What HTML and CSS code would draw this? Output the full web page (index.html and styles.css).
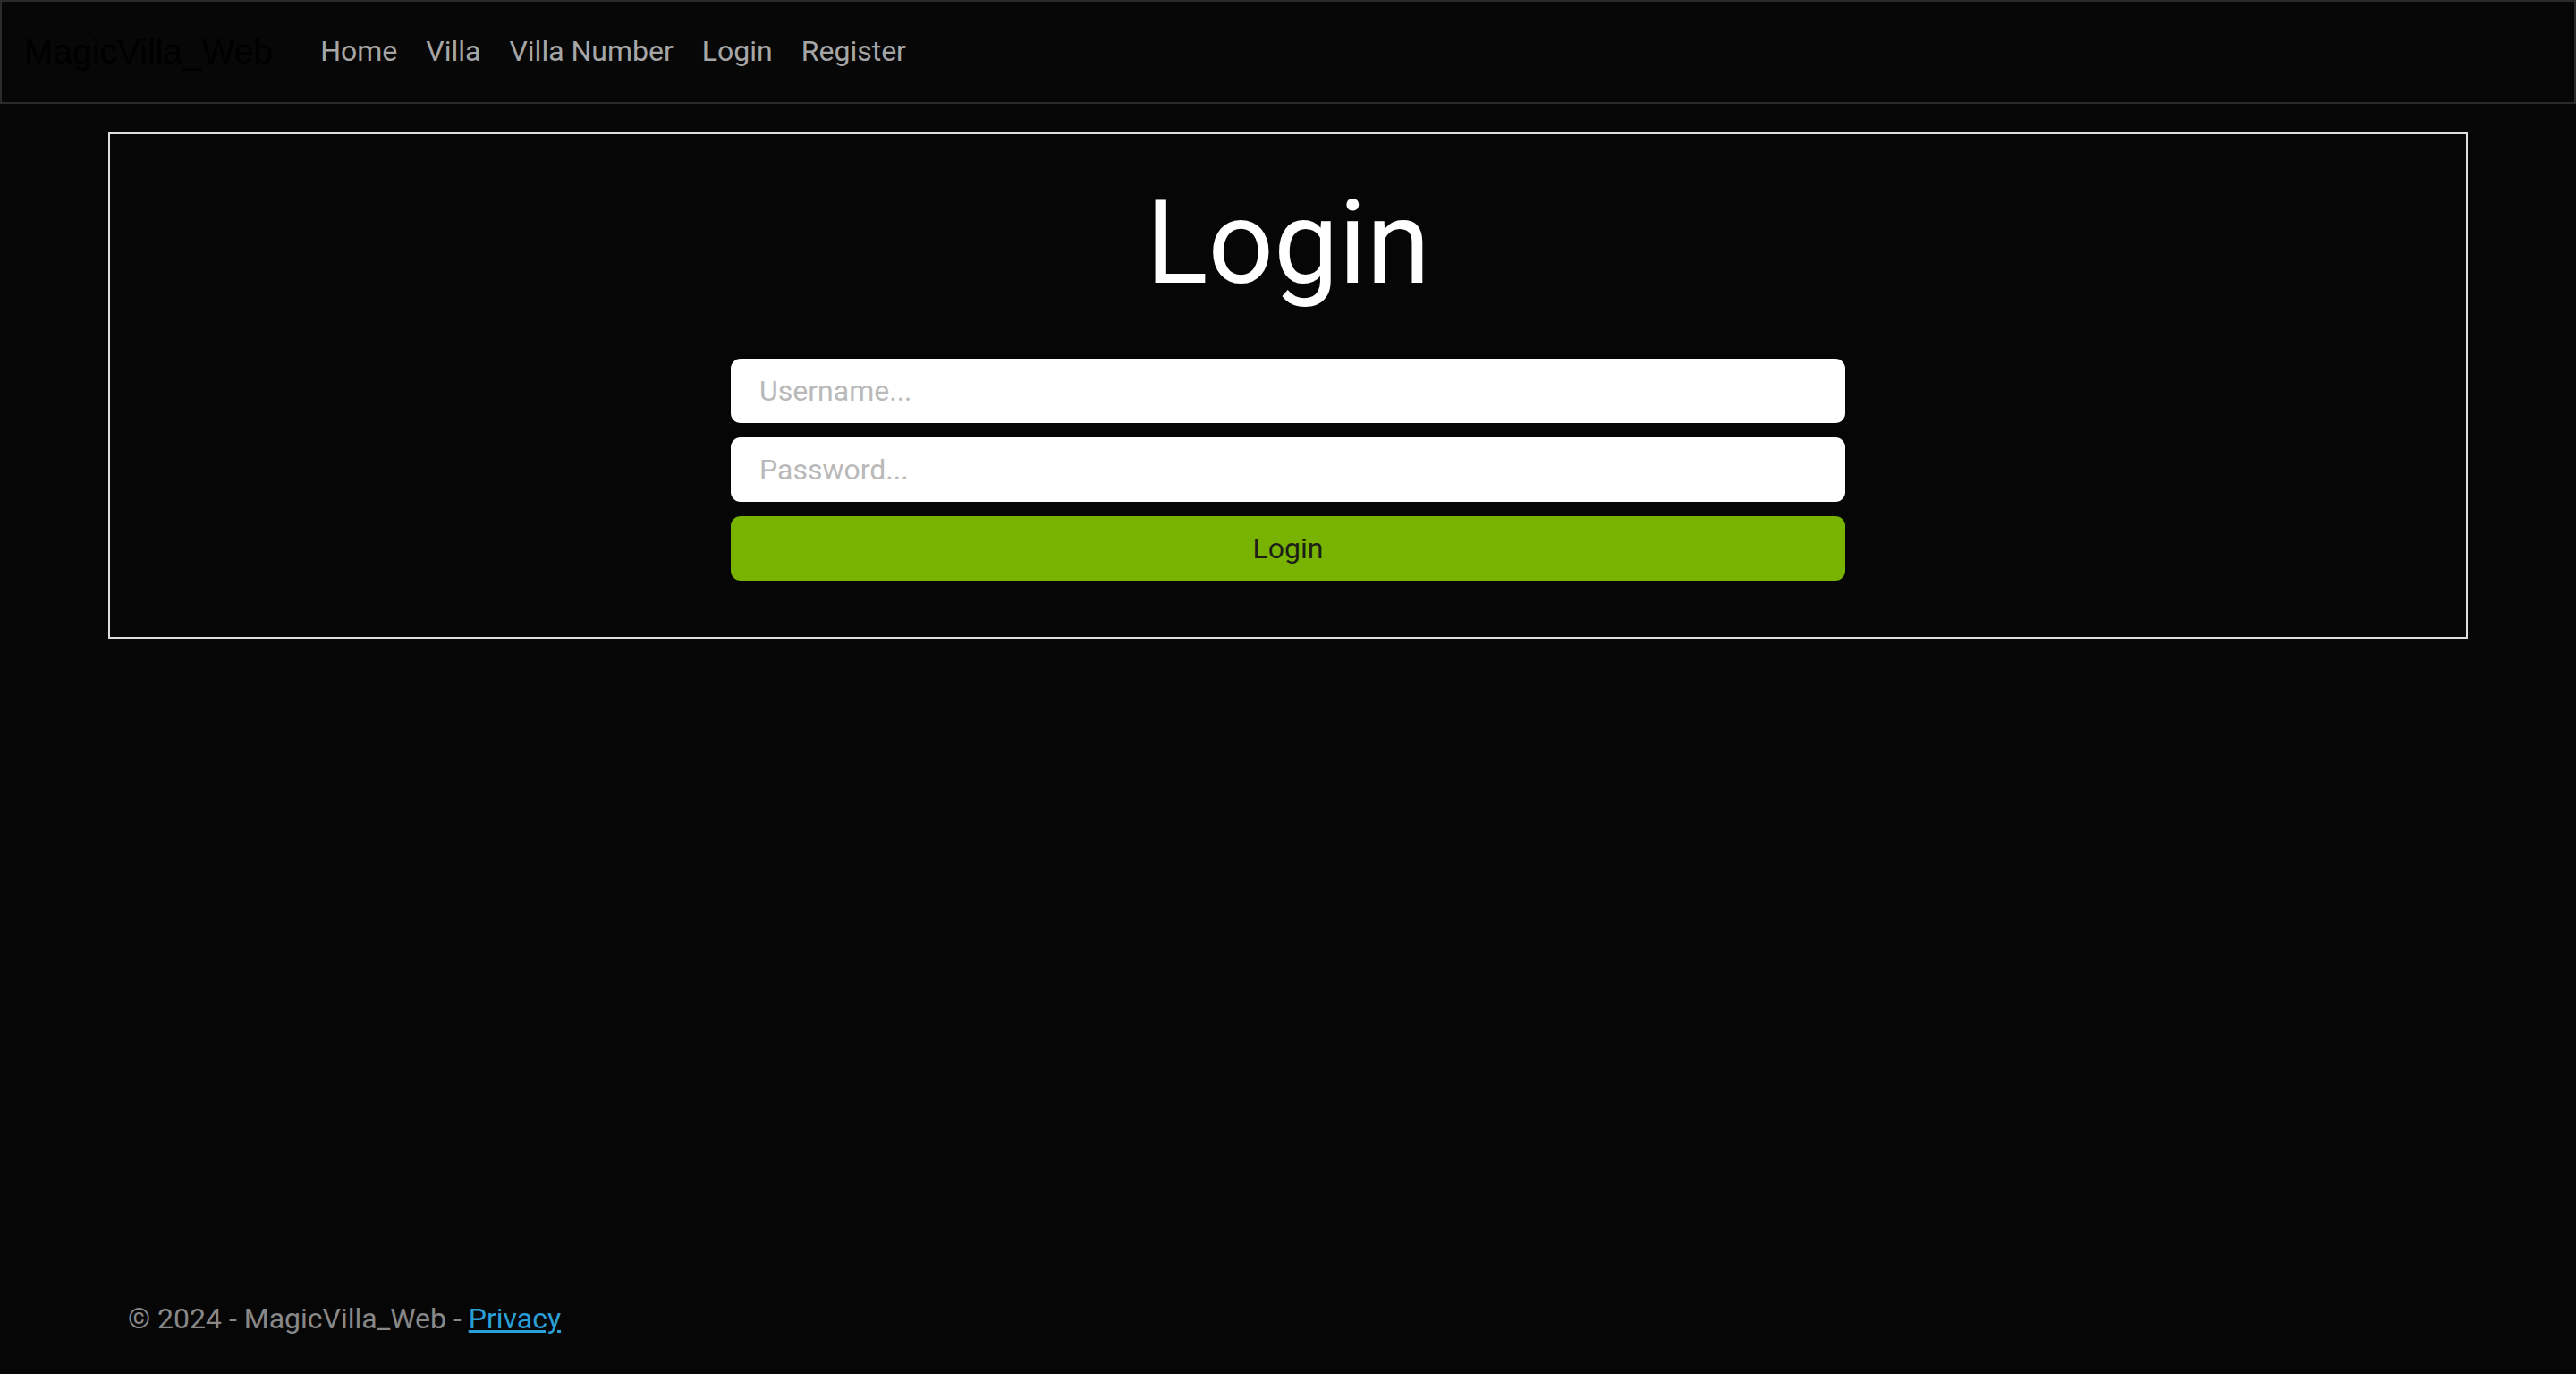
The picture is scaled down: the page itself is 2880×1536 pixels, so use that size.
FILE: index.html
```html
<!DOCTYPE html>
<html lang="en">
<head>
    <meta charset="UTF-8">
    <title>Login - MagicVilla_Web</title>
    <link rel="stylesheet" href="styles.css">
</head>
<body>
    <header>
        <nav class="navbar">
            <a class="brand" href="#">MagicVilla_Web</a>
            <ul class="nav-list">
                <li><a class="nav-link" href="#">Home</a></li>
                <li><a class="nav-link" href="#">Villa</a></li>
                <li><a class="nav-link" href="#">Villa Number</a></li>
                <li><a class="nav-link" href="#">Login</a></li>
                <li><a class="nav-link" href="#">Register</a></li>
            </ul>
        </nav>
    </header>

    <main class="container login-box">
        <h1 class="login-title">Login</h1>
        <form class="login-form" onsubmit="return false;">
            <input type="text" class="form-control" placeholder="Username...">
            <input type="password" class="form-control" placeholder="Password...">
            <button type="submit" class="btn-success">Login</button>
        </form>
    </main>

    <footer class="footer">
        &copy; 2024 - MagicVilla_Web - <a href="#">Privacy</a>
    </footer>
</body>
</html>
```

FILE: styles.css
```css
html, body { height: 100%; }
body {
    margin: 0;
    background: #060606;
    color: #adafae;
    font-family: Roboto, "Liberation Sans", sans-serif;
    font-size: 32px;
    position: relative;
}

/* top bar */
.navbar {
    height: 116px;
    box-sizing: border-box;
    border: 2px solid #2b2b2b;
    background: #070707;
    display: flex;
    align-items: center;
    padding: 0 22px 3px;
}
.brand {
    font-family: "Liberation Sans", Arial, sans-serif;
    font-size: 39px;
    color: #000;
    text-decoration: none;
    margin: 3px 37px 0 3px;
}
.nav-list {
    list-style: none;
    margin: 0;
    padding: 0;
    display: flex;
}
.nav-link {
    display: block;
    padding: 0 16px;
    color: #a6a6a6;
    text-decoration: none;
}

/* login card */
.container {
    width: 2638px;
    box-sizing: border-box;
    margin: 32px auto 0;
}
.login-box {
    border: 2px solid #dedede;
    padding: 45px 0 63px;
}
.login-title {
    margin: 0 0 51px;
    text-align: center;
    font-size: 129px;
    font-weight: 400;
    line-height: 1.2;
    color: #fff;
}
.login-form {
    width: 1246px;
    margin: 0 auto;
    display: flex;
    flex-direction: column;
    gap: 16px;
}
.form-control {
    height: 72px;
    box-sizing: border-box;
    border: none;
    border-radius: 11px;
    background: #fff;
    padding: 0 32px;
    font-family: Roboto, sans-serif;
    font-size: 32px;
    color: #222;
}
.form-control::placeholder { color: #b9b9b9; }
.btn-success {
    height: 72px;
    border: none;
    border-radius: 11px;
    background: #77b300;
    color: #1c1f17;
    font-family: Roboto, sans-serif;
    font-size: 32px;
    cursor: pointer;
}

/* footer */
.footer {
    position: absolute;
    left: 0;
    right: 0;
    bottom: 6px;
    line-height: 112px;
    padding-left: 143px;
    color: #888;
}
.footer a { color: #2a9fd6; }
```
